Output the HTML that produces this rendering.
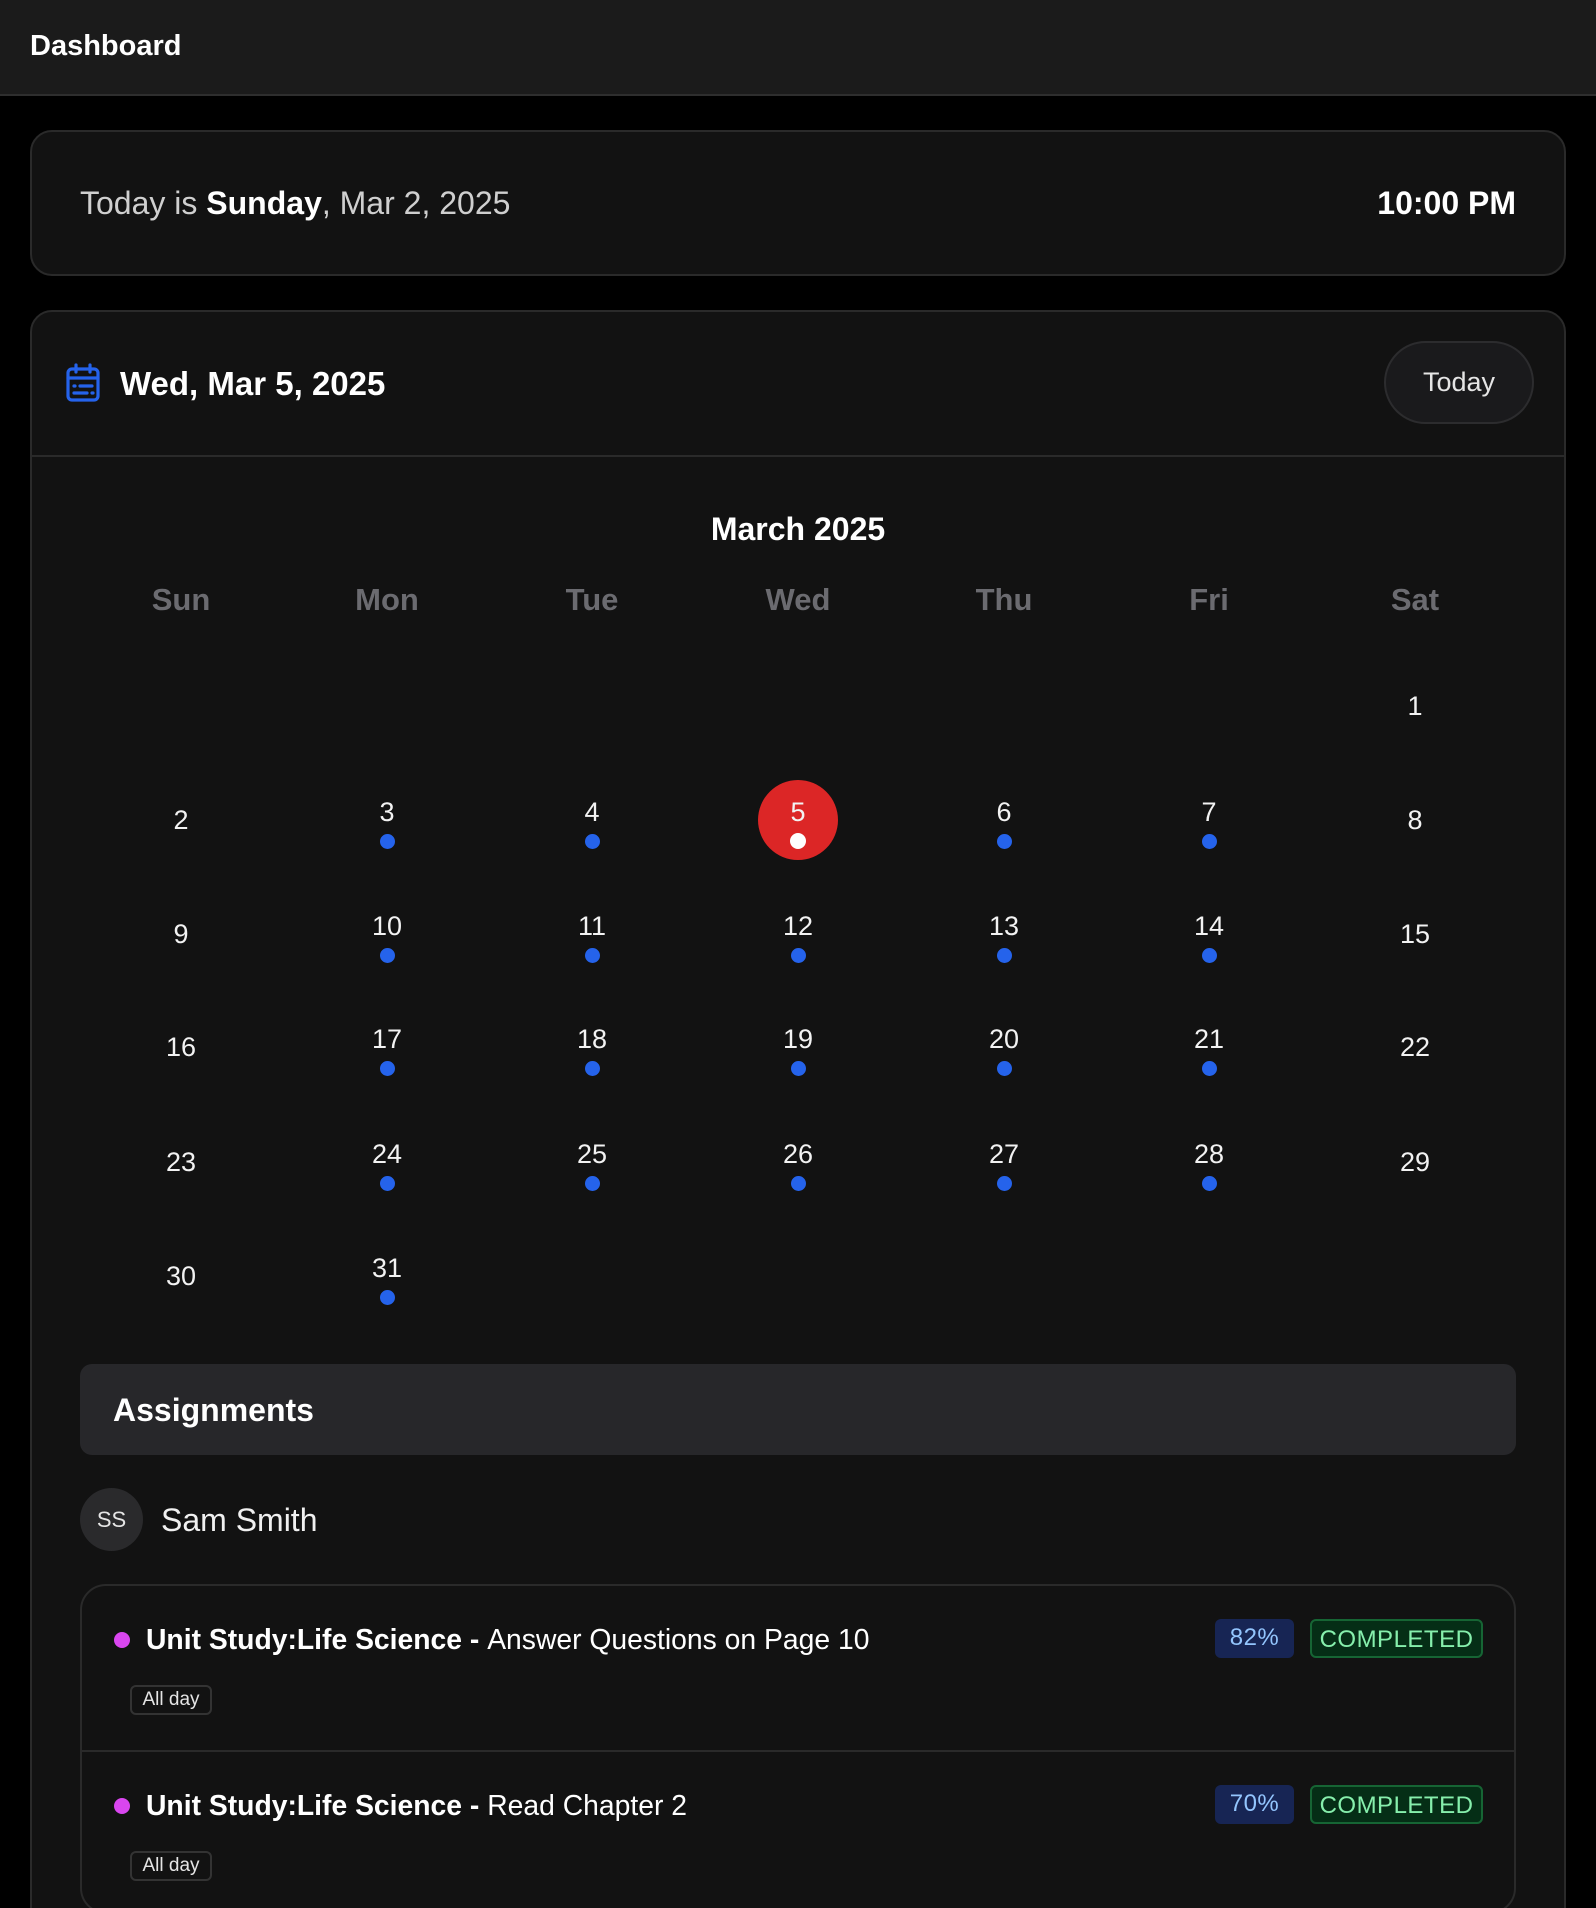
<!DOCTYPE html>
<html style="height:1908px;overflow:hidden"><head><meta charset="utf-8"><style>
*{margin:0;padding:0;box-sizing:border-box}
body{width:1596px;height:1908px;overflow:hidden;background:#000;font-family:"Liberation Sans",sans-serif;color:#fff;position:relative}
.a{position:absolute}
.hdr{left:0;top:0;width:1596px;height:96px;background:#1b1b1b;border-bottom:2px solid #2e2e2e}
.card{background:#121212;border:2px solid #2a2a2a;border-radius:22px}
.n{position:absolute;width:100px;margin-left:-50px;text-align:center;font-size:27px;line-height:30px;color:#f2f2f2}
.d{position:absolute;width:15px;height:15px;margin-left:-7.5px;border-radius:50%;background:#2563eb}
.wd{position:absolute;width:120px;margin-left:-60px;text-align:center;font-size:31px;font-weight:bold;color:#6b6b70;line-height:36px}
.badge{position:absolute;height:39px;border-radius:6px;font-size:24px;line-height:37px;text-align:center;letter-spacing:0.5px}
</style></head><body>
<div class="a hdr"></div>
<div class="a" style="left:30px;top:28px;font-size:29px;font-weight:bold;line-height:36px">Dashboard</div>

<div class="a card" style="left:30px;top:130px;width:1536px;height:146px"></div>
<div class="a" style="left:80px;top:185px;font-size:32px;line-height:36px;color:#cfcfcf">Today is <b style="color:#fff">Sunday</b>, Mar 2, 2025</div>
<div class="a" style="right:80px;top:185px;font-size:32px;font-weight:bold;line-height:36px">10:00 PM</div>

<div class="a card" style="left:30px;top:310px;width:1536px;height:1620px"></div>
<div class="a" style="left:32px;top:455px;width:1532px;height:2px;background:#2a2a2a"></div>
<svg class="a" style="left:65px;top:363px" width="36" height="40" viewBox="0 0 36 40" fill="none" stroke="#2563eb" stroke-width="3.2" stroke-linecap="round"><rect x="3" y="6" width="30" height="31" rx="4"/><line x1="3" y1="15" x2="33" y2="15"/><line x1="11" y1="2" x2="11" y2="9"/><line x1="25" y1="2" x2="25" y2="9"/><line x1="9" y1="23" x2="10" y2="23"/><line x1="15" y1="23" x2="27" y2="23"/><line x1="9" y1="30" x2="22" y2="30"/><line x1="27" y1="30" x2="28" y2="30"/></svg>
<div class="a" style="left:120px;top:364px;font-size:33px;font-weight:bold;line-height:40px">Wed, Mar 5, 2025</div>
<div class="a" style="left:1384px;top:341px;width:150px;height:83px;border-radius:42px;background:#1a1a1c;border:2px solid #2c2c2e;font-size:27px;line-height:79px;text-align:center;color:#e5e5e5">Today</div>

<div class="a" style="left:598px;top:510px;width:400px;text-align:center;font-size:32px;font-weight:bold;line-height:38px">March 2025</div>
<div class="wd" style="left:181px;top:582px">Sun</div>
<div class="wd" style="left:387px;top:582px">Mon</div>
<div class="wd" style="left:592px;top:582px">Tue</div>
<div class="wd" style="left:798px;top:582px">Wed</div>
<div class="wd" style="left:1004px;top:582px">Thu</div>
<div class="wd" style="left:1209px;top:582px">Fri</div>
<div class="wd" style="left:1415px;top:582px">Sat</div>

<div class="a" style="left:758px;top:780px;width:80px;height:80px;border-radius:50%;background:#dc2626"></div>
<div class="d" style="left:798px;top:833px;background:#fff;width:16px;height:16px;margin-left:-8px"></div>

<div id="cal"></div>
<script>
var cols=[181,387,592,798,1004,1209,1415],rows=[706,820,934,1047,1162,1276],h='';
for(var day=1;day<=31;day++){var i=day+5,c=i%7,r=Math.floor(i/7);var x=cols[c],y=rows[r];var dot=(c>=1&&c<=5);
if(dot){h+='<div class="n" style="left:'+x+'px;top:'+(y-23)+'px">'+day+'</div>';if(day!=5)h+='<div class="d" style="left:'+x+'px;top:'+(y+14)+'px"></div>';}
else h+='<div class="n" style="left:'+x+'px;top:'+(y-15)+'px">'+day+'</div>';}
document.getElementById('cal').innerHTML=h;
</script>

<div class="a" style="left:80px;top:1364px;width:1436px;height:91px;border-radius:12px;background:#27272a"></div>
<div class="a" style="left:113px;top:1391px;font-size:32px;font-weight:bold;line-height:38px">Assignments</div>
<div class="a" style="left:80px;top:1488px;width:63px;height:63px;border-radius:50%;background:#2a2a2c;font-size:22px;line-height:63px;text-align:center;color:#e5e5e5">SS</div>
<div class="a" style="left:161px;top:1501px;font-size:32px;line-height:38px;color:#f0f0f0">Sam Smith</div>

<div class="a" style="left:80px;top:1584px;width:1436px;height:330px;border:2px solid #2a2a2a;border-radius:26px;background:#121212"></div>
<div class="a" style="left:82px;top:1750px;width:1432px;height:2px;background:#2a2a2a"></div>

<div class="a" style="left:114px;top:1632px;width:16px;height:16px;border-radius:50%;background:#d946ef"></div>
<div class="a" style="left:146px;top:1622px;font-size:28.3px;line-height:34px;white-space:nowrap"><b>Unit Study:Life Science - </b>Answer Questions on Page 10</div>
<div class="badge" style="left:1215px;top:1619px;width:79px;background:#172554;color:#93c5fd">82%</div>
<div class="badge" style="left:1310px;top:1619px;width:173px;background:#052e16;border:2px solid #166534;color:#86efac">COMPLETED</div>
<div class="a" style="left:130px;top:1685px;width:82px;height:30px;border:2px solid #333;border-radius:6px;font-size:19px;line-height:26px;text-align:center;color:#e5e5e5">All day</div>

<div class="a" style="left:114px;top:1798px;width:16px;height:16px;border-radius:50%;background:#d946ef"></div>
<div class="a" style="left:146px;top:1788px;font-size:28.3px;line-height:34px;white-space:nowrap"><b>Unit Study:Life Science - </b>Read Chapter 2</div>
<div class="badge" style="left:1215px;top:1785px;width:79px;background:#172554;color:#93c5fd">70%</div>
<div class="badge" style="left:1310px;top:1785px;width:173px;background:#052e16;border:2px solid #166534;color:#86efac">COMPLETED</div>
<div class="a" style="left:130px;top:1851px;width:82px;height:30px;border:2px solid #333;border-radius:6px;font-size:19px;line-height:26px;text-align:center;color:#e5e5e5">All day</div>
</body></html>
